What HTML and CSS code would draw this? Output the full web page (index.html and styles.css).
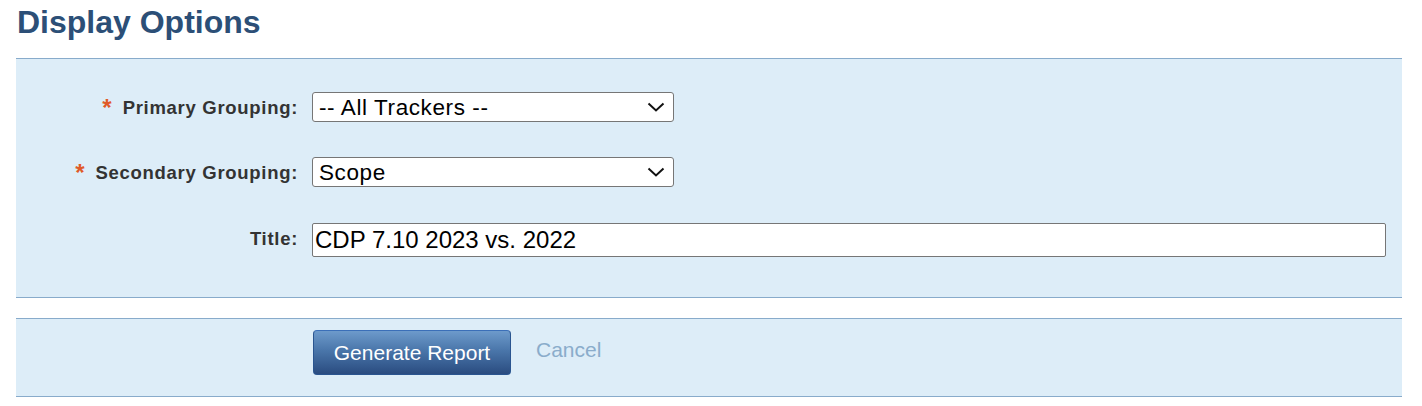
FILE: index.html
```html
<!DOCTYPE html>
<html>
<head>
<meta charset="utf-8">
<link rel="stylesheet" href="styles.css">
</head>
<body>
<h1 class="title">Display Options</h1>
<div class="panel form-panel">
  <div class="row">
    <label class="label"><span class="req">*</span>Primary Grouping:</label>
    <span class="select-wrap">
      <select class="select"><option>-- All Trackers --</option></select>
      <svg class="chev" width="18" height="10" viewBox="0 0 18 10"><path d="M1.5 1.5 L9 8.5 L16.5 1.5" fill="none" stroke="#111" stroke-width="2"/></svg>
    </span>
  </div>
  <div class="row">
    <label class="label"><span class="req">*</span>Secondary Grouping:</label>
    <span class="select-wrap">
      <select class="select"><option>Scope</option></select>
      <svg class="chev" width="18" height="10" viewBox="0 0 18 10"><path d="M1.5 1.5 L9 8.5 L16.5 1.5" fill="none" stroke="#111" stroke-width="2"/></svg>
    </span>
  </div>
  <div class="row row-title">
    <label class="label">Title:</label>
    <input class="text-input" type="text" value="CDP 7.10 2023 vs. 2022">
  </div>
</div>
<div class="panel action-panel">
  <button class="btn">Generate Report</button>
  <a class="cancel">Cancel</a>
</div>
</body>
</html>
```
FILE: styles.css
```css
html, body {
  margin: 0;
  padding: 0;
  background: #fff;
  font-family: "Liberation Sans", Arial, sans-serif;
}
body {
  padding: 0 20px 0 16px;
}
.title {
  margin: 0;
  padding: 2px 0 0 1px;
  height: 54px;
  box-sizing: border-box;
  font-size: 32px;
  font-weight: bold;
  color: #2c4f77;
  line-height: 40px;
}
.panel {
  background: #ddedf8;
  border-top: 1px solid #88abcb;
  border-bottom: 1px solid #88abcb;
}
.form-panel {
  margin-top: 4px;
  padding: 33px 0 40px;
  display: flex;
  flex-direction: column;
  gap: 35px;
}
.row-title {
  margin-top: 1px;
}
.row {
  display: flex;
  align-items: center;
}
.label {
  width: 282px;
  text-align: right;
  margin-right: 14px;
  font-size: 18.5px;
  letter-spacing: 0.7px;
  font-weight: bold;
  color: #333;
  white-space: nowrap;
  position: relative;
  top: -1px;
}
.req {
  color: #e05a28;
  font-size: 24px;
  margin-right: 11px;
  position: relative;
  top: 2px;
  letter-spacing: 0;
}
.select-wrap {
  position: relative;
  display: inline-block;
}
.select {
  -webkit-appearance: none;
  appearance: none;
  width: 362px;
  height: 30px;
  box-sizing: border-box;
  border: 1px solid #767676;
  border-radius: 3px;
  background: #fff;
  padding: 0 0 0 6px;
  font-family: "Liberation Sans", Arial, sans-serif;
  font-size: 22.5px;
  letter-spacing: 0.6px;
  color: #000;
}
.chev {
  position: absolute;
  right: 9px;
  top: 10px;
  pointer-events: none;
}
.text-input {
  width: 1074px;
  height: 34px;
  box-sizing: border-box;
  border: 1px solid #767676;
  border-radius: 2px;
  background: #fff;
  padding: 0 2px;
  font-family: "Liberation Sans", Arial, sans-serif;
  font-size: 24px;
  color: #000;
}
.action-panel {
  margin-top: 20px;
  height: 66px;
  padding: 11px 0 0 297px;
  display: flex;
  align-items: flex-start;
  gap: 25px;
}
.btn {
  width: 198px;
  height: 45px;
  border: 1px solid #2a5590;
  border-top-color: #3b6fb8;
  border-radius: 4px;
  background: linear-gradient(to bottom, #6d9acb 0%, #4a76aa 45%, #2a4c80 100%);
  color: #fff;
  font-family: "Liberation Sans", Arial, sans-serif;
  font-size: 21px;
  padding: 0;
}
.cancel {
  color: #8aaccb;
  font-size: 21px;
  line-height: 40px;
}
```
